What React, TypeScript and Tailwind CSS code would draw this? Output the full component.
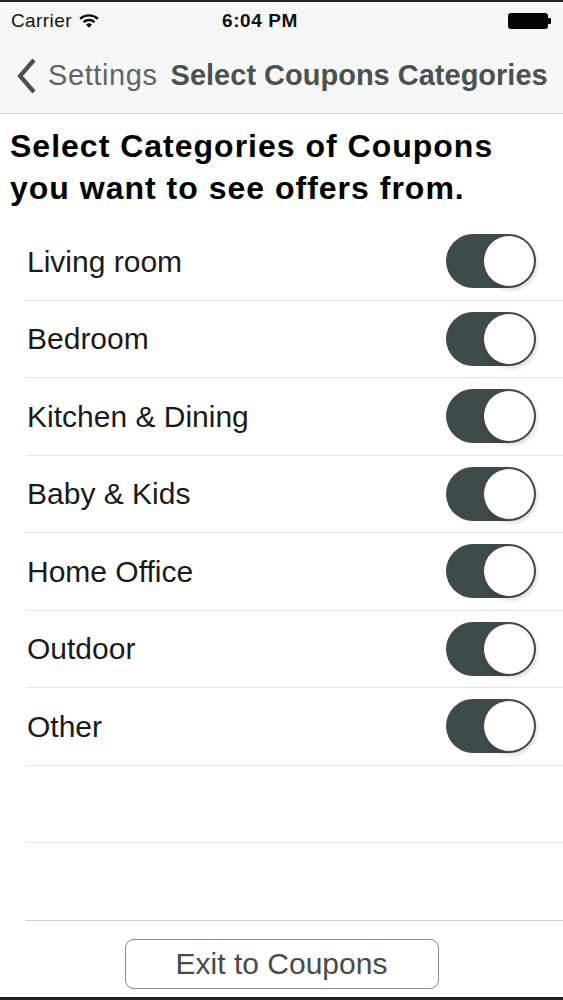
import React from "react";

const items = [
  "Living room",
  "Bedroom",
  "Kitchen & Dining",
  "Baby & Kids",
  "Home Office",
  "Outdoor",
  "Other",
];

function Toggle() {
  return (
    <div className="relative w-[90px] h-[54px] rounded-full bg-[#3f4a4c] shrink-0">
      <div className="absolute right-[1px] top-[1px] w-[52px] h-[52px] rounded-full bg-white border-[1.5px] border-[#3a4446] shadow-[2px_3px_4px_rgba(0,0,0,0.15)]" />
    </div>
  );
}

export default function App() {
  return (
    <div
      className="w-[563px] h-[1000px] bg-white flex flex-col overflow-hidden border-t-[2px] border-b-[3px] border-[#222]"
      style={{ fontFamily: '"Liberation Sans", Arial, sans-serif' }}
    >
      {/* Status bar + nav */}
      <div className="bg-[#f7f7f8] border-b border-[#d4d4d6]">
        <div className="h-[38px] flex items-center justify-between px-[11px] relative">
          <div className="flex items-center gap-[7px] text-[19px] tracking-[0.4px] text-[#111]">
            <span>Carrier</span>
            <svg width="20" height="16" viewBox="0 0 18 14">
              <path d="M1 5 A12 12 0 0 1 17 5" stroke="#111" strokeWidth="2.2" fill="none" />
              <path d="M4 8 A7.5 7.5 0 0 1 14 8" stroke="#111" strokeWidth="2.2" fill="none" />
              <path d="M9 13 L6.3 10.3 A4 4 0 0 1 11.7 10.3 Z" fill="#111" />
            </svg>
          </div>
          <div className="absolute left-[222px] text-[19px] tracking-[0.6px] font-bold text-[#111] pointer-events-none">
            6:04 PM
          </div>
          <div className="flex items-center pr-[1px]">
            <div className="w-[40px] h-[16px] rounded-[3px] bg-[#050505]" />
            <div className="w-[3px] h-[6px] bg-[#050505] rounded-r-[1px]" />
          </div>
        </div>
        <div className="h-[73px] flex items-center pl-[15px] pb-[2px]">
          <svg width="22" height="36" viewBox="0 0 22 36" className="mr-[11px]">
            <path d="M19 2 L5 18 L19 34" stroke="#4a4f51" strokeWidth="4.2" fill="none" strokeLinejoin="miter" />
          </svg>
          <span className="text-[29px] tracking-[0.6px] text-[#5f6466]">Settings</span>
          <span className="ml-[13px] text-[29px] font-bold text-[#4b5153]">
            Select Coupons Categories
          </span>
        </div>
      </div>

      {/* Heading */}
      <div className="pl-[10px] pt-[11px] pb-[14px] text-[32px] tracking-[1px] font-bold leading-[42px] text-black">
        Select Categories of Coupons
        <br />
        you want to see offers from.
      </div>

      {/* List */}
      <div className="flex flex-col">
        {items.map((it) => (
          <div key={it} className="pl-[26px]">
            <div className="h-[77.5px] flex items-center justify-between pr-[27px] border-b border-[#e4e4e6]">
              <span className="pl-[1px] text-[30px] text-[#1a1a1a]">{it}</span>
              <Toggle />
            </div>
          </div>
        ))}
        <div className="pl-[26px]">
          <div className="h-[77.5px] border-b border-[#e4e4e6]" />
        </div>
        <div className="pl-[26px]">
          <div className="h-[77.5px] border-b border-[#d0d0d2]" />
        </div>
      </div>

      {/* Button */}
      <div className="flex justify-center pt-[18px]">
        <div className="w-[314px] h-[50px] rounded-[9px] border border-[#8a8a8a] flex items-center justify-center text-[30px] text-[#4a4a4a]">
          Exit to Coupons
        </div>
      </div>
    </div>
  );
}
